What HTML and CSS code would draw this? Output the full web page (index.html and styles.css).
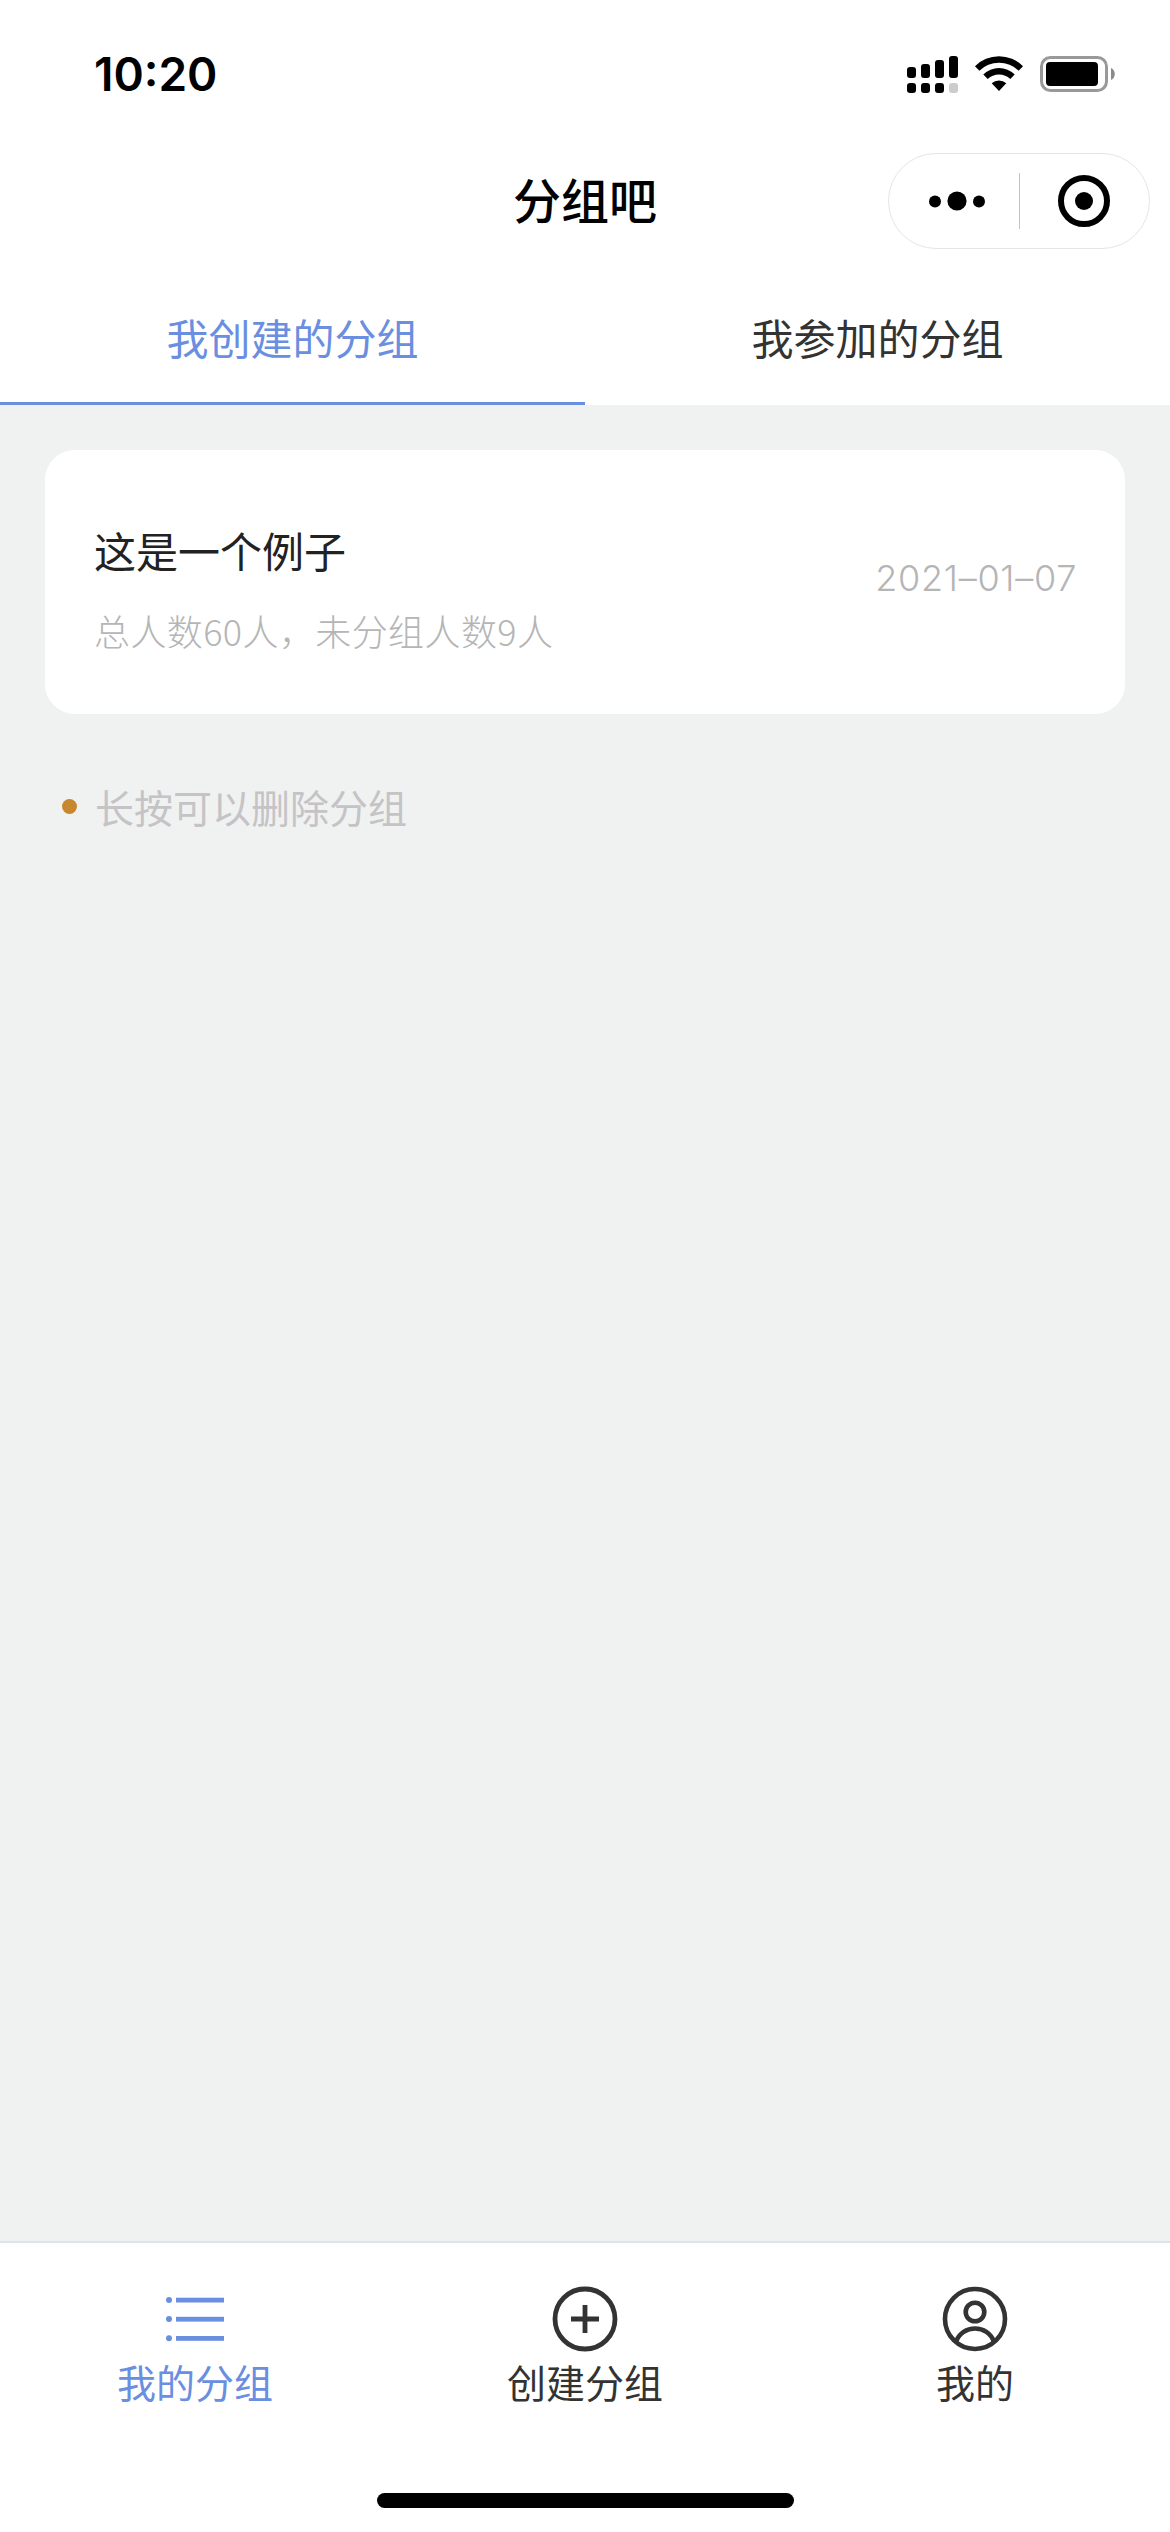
FILE: index.html
```html
<!DOCTYPE html>
<html lang="zh-CN">
<head>
    <meta charset="UTF-8">
    <meta name="viewport" content="width=device-width, initial-scale=1.0">
    <title>分组吧</title>
    <link rel="stylesheet" href="styles.css">
</head>
<body>
    <header>
        <div class="status-bar">
            <span class="time">10:20</span>
            <svg width="210" height="40" viewBox="0 0 210 40">
                <!-- signal -->
                <rect x="2" y="13" width="9" height="11" rx="3"/>
                <rect x="16" y="10" width="9" height="14" rx="3"/>
                <rect x="30" y="6" width="9" height="18" rx="3"/>
                <rect x="44" y="2" width="9" height="22" rx="3"/>
                <rect x="2" y="29" width="9" height="10" rx="3"/>
                <rect x="16" y="29" width="9" height="10" rx="3"/>
                <rect x="30" y="29" width="9" height="10" rx="3"/>
                <rect x="44" y="29" width="9" height="10" rx="3" fill="#ccc"/>
                <!-- wifi -->
                <path d="M70 12.2A34 34 0 0 1 118 12.2L113.6 16.8A28 28 0 0 0 74.4 16.8Z"/>
                <path d="M78.3 20.4A22.4 22.4 0 0 1 109.7 20.4L105.3 25A16.4 16.4 0 0 0 82.7 25Z"/>
                <path d="M86.7 29.2A11 11 0 0 1 101.3 29.2L94 37Z"/>
                <!-- battery -->
                <rect x="136.5" y="3.5" width="65" height="33" rx="9" fill="none" stroke="#999" stroke-width="3"/>
                <rect x="141" y="8" width="52" height="24" rx="4"/>
                <path d="M206 14C211 16 211 24 206 26Z" fill="#8a8a8a"/>
            </svg>
        </div>
        <div class="nav-bar">
            <h1>分组吧</h1>
            <div class="capsule">
                <svg class="more" width="56" height="20" viewBox="0 0 56 20">
                    <circle cx="6" cy="10.5" r="6"/>
                    <circle cx="28" cy="10" r="9.6"/>
                    <circle cx="50" cy="10.5" r="6"/>
                </svg>
                <span class="divider"></span>
                <svg width="52" height="52" viewBox="0 0 52 52">
                    <circle cx="26" cy="26" r="23" fill="none" stroke="#000" stroke-width="6"/>
                    <circle cx="26" cy="26" r="9"/>
                </svg>
            </div>
        </div>
        <nav class="tabs">
            <div class="tab active">我创建的分组</div>
            <div class="tab">我参加的分组</div>
        </nav>
    </header>

    <main>
        <div class="card">
            <div>
                <div class="card-title">这是一个例子</div>
                <div class="card-info">总人数60人，未分组人数9人</div>
            </div>
            <div class="card-date">2021–01–07</div>
        </div>
        <div class="tip">
            <span class="dot"></span>
            <span>长按可以删除分组</span>
        </div>
    </main>

    <footer>
        <div class="tab-bar">
            <div class="item active">
                <svg width="66" height="66" viewBox="0 0 66 66">
                    <g fill="currentColor">
                        <circle cx="7" cy="14" r="3"/>
                        <circle cx="7" cy="33" r="3"/>
                        <circle cx="7" cy="52.3" r="3"/>
                        <rect x="14" y="11.7" width="48" height="4.8"/>
                        <rect x="14" y="30.8" width="48" height="4.8"/>
                        <rect x="14" y="50" width="48" height="4.8"/>
                    </g>
                </svg>
                <span>我的分组</span>
            </div>
            <div class="item">
                <svg width="66" height="66" viewBox="0 0 66 66">
                    <g fill="none" stroke="currentColor" stroke-width="4.8">
                        <circle cx="33" cy="33" r="30"/>
                        <path d="M33 19V47M19 33H47"/>
                    </g>
                </svg>
                <span>创建分组</span>
            </div>
            <div class="item">
                <svg width="66" height="66" viewBox="0 0 66 66">
                    <g fill="none" stroke="currentColor" stroke-width="4.6">
                        <circle cx="33" cy="33" r="30"/>
                        <circle cx="33" cy="26" r="9.3"/>
                        <path d="M14 56C20 38 46 38 52 56"/>
                    </g>
                </svg>
                <span>我的</span>
            </div>
        </div>
        <div class="home-indicator"></div>
    </footer>
</body>
</html>
```

FILE: styles.css
```css
* {
    box-sizing: border-box;
}

body {
    margin: 0;
    width: 1170px;
    height: 2532px;
    display: flex;
    flex-direction: column;
    background-color: #f0f2f1;
    color: #333;
    font-family: "Noto Sans CJK SC", sans-serif;
    font-size: 42px;
}

svg {
    display: block;
}

header {
    background-color: white;
}

.status-bar {
    height: 141px;
    padding: 54px 55px 0 94px;
    display: flex;
    justify-content: space-between;
}

.time {
    height: 42px;
    line-height: 41px;
    color: black;
    font-family: Inter, sans-serif;
    font-size: 46px;
    font-weight: 600;
}

.nav-bar {
    height: 132px;
    padding: 12px 20px 0;
    display: grid;
    grid-template-columns: 262px 1fr 262px;
}

h1 {
    grid-column: 2;
    margin: 0;
    color: black;
    font-size: 48px;
    font-weight: 500;
    line-height: 90px;
    text-align: center;
}

.capsule {
    height: 96px;
    border: 1px solid #e5e5e5;
    border-radius: 48px;
    display: grid;
    grid-template-columns: 1fr 1px 1fr;
    align-items: center;
    justify-items: center;
}

.more {
    margin-left: 6px;
}

.divider {
    width: 1px;
    height: 56px;
    background-color: #c4c4c4;
}

.tabs {
    height: 132px;
    display: flex;
}

.tab {
    flex: 1;
    padding-top: 32px;
    line-height: 64px;
    text-align: center;
}

.active {
    color: #6a8ee0;
}

.tab.active {
    border-bottom: 3px solid #6a8ee0;
}

main {
    flex: 1;
    padding: 45px;
}

.card {
    height: 264px;
    padding: 70px 48px 0 49px;
    border-radius: 30px;
    background-color: white;
    display: flex;
    justify-content: space-between;
}

.card-title {
    color: #222;
    line-height: 60px;
}

.card-info {
    margin-top: 24px;
    color: #b5b5b5;
    font-size: 36px;
    font-weight: 300;
    letter-spacing: 0.4px;
    line-height: 52px;
}

.card-date {
    color: #b5b5b5;
    font-family: Inter, sans-serif;
    font-size: 36px;
    font-weight: 300;
    letter-spacing: 0.7px;
    line-height: 116px;
}

.tip {
    margin-top: 63px;
    padding-left: 17px;
    display: flex;
    align-items: center;
    gap: 18px;
    color: #c5c3c6;
    font-size: 39px;
    line-height: 58px;
}

.dot {
    width: 15px;
    height: 15px;
    border-radius: 50%;
    background-color: #c8862f;
}

footer {
    height: 291px;
    border-top: 2px solid #dbe3ec;
    background-color: white;
}

.tab-bar {
    height: 250px;
    padding-top: 43px;
    display: flex;
}

.item {
    flex: 1;
    display: flex;
    flex-direction: column;
    align-items: center;
    font-size: 39px;
    line-height: 58px;
}

.home-indicator {
    width: 417px;
    height: 15px;
    margin: 0 auto;
    border-radius: 8px;
    background-color: black;
}
```
